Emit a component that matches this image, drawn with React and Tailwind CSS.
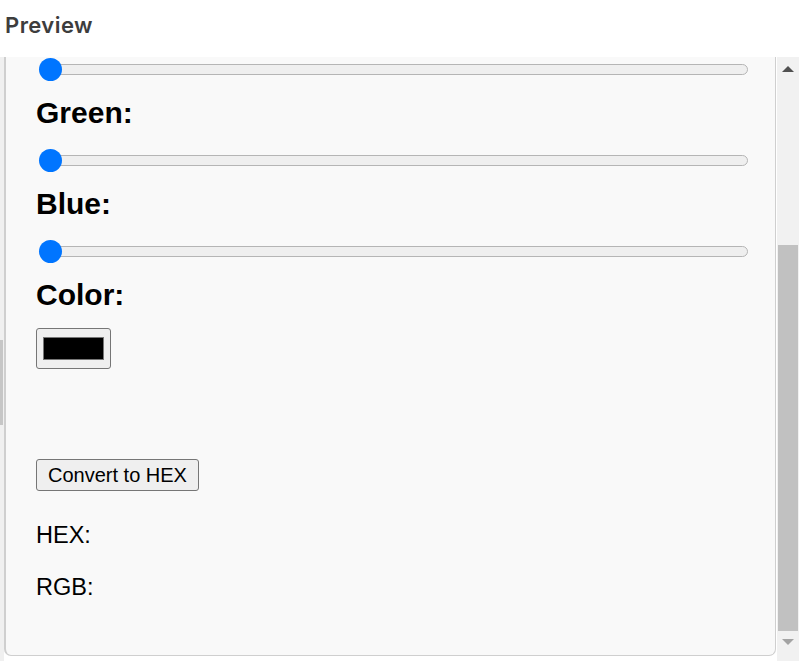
import React from 'react';

const channels = ['Green', 'Blue'];

function Slider() {
  return (
    <div className="relative flex items-center h-[23px] w-full">
      <div className="ml-[4px] h-[11px] flex-1 rounded-full border border-[#b5b5b5] bg-[#efefef]" />
      <div className="absolute left-[3px] top-0 h-[23px] w-[23px] rounded-full bg-[#0075ff]" />
    </div>
  );
}

function Label({ children }) {
  return (
    <label className="block text-[30px] leading-[34px] font-bold text-black">{children}</label>
  );
}

export default function App() {
  return (
    <div
      className="w-[799px] h-[661px] flex flex-col bg-white overflow-hidden"
      style={{ fontFamily: '"Liberation Sans", Arial, sans-serif' }}
    >
      <div className="h-[57px] shrink-0 pl-[5px] pt-[12px]">
        <h1
          className="text-[22px] leading-[26px] font-semibold text-[#3d3d3d] tracking-[0.02em]"
          style={{ fontFamily: 'Inter, "Open Sans", sans-serif' }}
        >
          Preview
        </h1>
      </div>

      <div className="flex-1 flex min-h-0">
        {/* resize handle strip */}
        <div className="w-[4px] bg-[#f0f0f0]">
          <div className="mt-[283px] h-[85px] w-[3px] bg-[#c6c6c6]" />
        </div>

        {/* preview panel */}
        <div className="w-[772px] mb-[5px] bg-[#f9f9f9] border-l-2 border-r border-b border-[#cfcfcf] rounded-b-[7px] overflow-hidden">
          <div className="pl-[30px] pr-[27px] pt-[1px]">
            <Slider />
            {channels.map((c) => (
              <div key={c}>
                <div className="mt-[15px]">
                  <Label>{c}:</Label>
                </div>
                <div className="mt-[19px]">
                  <Slider />
                </div>
              </div>
            ))}
            <div className="mt-[15px]">
              <Label>Color:</Label>
            </div>
            <div className="mt-[16px] w-[75px] h-[41px] flex items-center justify-center rounded-[3px] border border-[#767676] bg-[#efefef]">
              <div className="w-[61px] h-[23px] border border-[#777777] bg-black" />
            </div>
            <button className="mt-[90px] block w-[163px] h-[32px] rounded-[3px] border border-[#767676] bg-[#efefef] text-[20px] leading-[22px] text-black">
              Convert to HEX
            </button>
            <p className="mt-[31px] text-[23.5px] leading-[26px] text-black">HEX:</p>
            <p className="mt-[26px] text-[23.5px] leading-[26px] text-black">RGB:</p>
          </div>
        </div>

        <div className="w-[1px]" />

        {/* scrollbar */}
        <div className="w-[22px] bg-[#f1f1f1] flex flex-col items-center">
          <div className="h-[15px] flex items-end justify-center">
            <svg width="12" height="6" viewBox="0 0 12 6">
              <polygon points="0,6 6,0 12,6" fill="#505050" />
            </svg>
          </div>
          <div className="mt-[173px] h-[386px] w-[20px] bg-[#c1c1c1]" />
          <div className="mt-[8px] flex justify-center">
            <svg width="12" height="6" viewBox="0 0 12 6">
              <polygon points="0,0 12,0 6,6" fill="#a3a3a3" />
            </svg>
          </div>
        </div>
      </div>
    </div>
  );
}
